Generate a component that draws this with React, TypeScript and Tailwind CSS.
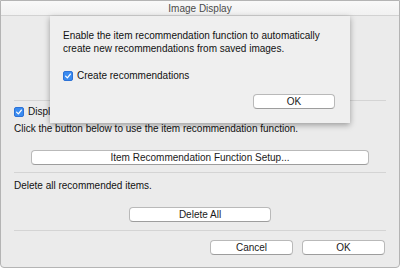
import React from "react";

function Check({ label }: { label: string }) {
  return (
    <div className="flex items-center gap-[4px]">
      <span className="flex h-[10px] w-[10px] items-center justify-center rounded-[2px] bg-[#3a8bf0] border border-[#2d72d6]">
        <svg viewBox="0 0 10 10" className="h-[8px] w-[8px]">
          <path d="M2 5.2 L4.2 7.4 L8 2.6" fill="none" stroke="white" strokeWidth="1.6" strokeLinecap="round" strokeLinejoin="round" />
        </svg>
      </span>
      <span>{label}</span>
    </div>
  );
}

function Btn({ children, className = "" }: { children: React.ReactNode; className?: string }) {
  return (
    <div
      className={
        "flex h-[15px] items-center justify-center rounded-[4px] border border-[#b9b9b9] border-b-[#9d9d9d] bg-white text-[10px] leading-none text-[#1a1a1a] " +
        className
      }
    >
      {children}
    </div>
  );
}

export default function App() {
  return (
    <div className="relative h-[269px] w-[400px] overflow-hidden bg-white font-['Liberation_Sans',Arial,sans-serif] text-[10px] text-[#111] whitespace-nowrap">
      <div className="flex h-[268px] w-[400px] flex-col rounded-b-[4px] border border-[#b4b4b4] bg-[#ebebeb]">
        <div className="flex h-[15px] items-center justify-center border-b border-[#d2d2d2] bg-gradient-to-b from-[#f9f9f9] to-[#f1f1f1] text-[10px] text-[#4a4a4a]">
          Image Display
        </div>

        <div className="flex flex-col px-[13px]">
          <div className="mt-[84px] h-px bg-[#d4d4d4]" />
          <div className="mt-[5px] leading-[12px]">
            <Check label="Display recommended items" />
          </div>
          <p className="mt-[5px] leading-[12px]">Click the button below to use the item recommendation function.</p>
          <div className="mt-[15px] px-[17px]">
            <Btn>Item Recommendation Function Setup...</Btn>
          </div>
          <div className="mt-[7px] h-px bg-[#d4d4d4]" />
          <p className="mt-[7px] leading-[12px]">Delete all recommended items.</p>
          <div className="mt-[15px] flex justify-center">
            <Btn className="w-[142px]">Delete All</Btn>
          </div>
          <div className="mt-[8px] h-px bg-[#d4d4d4]" />
          <div className="mt-[9px] flex justify-end gap-[9px] pr-[1px]">
            <Btn className="w-[83px]">Cancel</Btn>
            <Btn className="w-[83px]">OK</Btn>
          </div>
        </div>
      </div>

      <div className="absolute left-[50px] top-[16px] flex h-[107px] w-[300px] flex-col bg-[#efefef] px-[13px] pt-[13px] shadow-[0_2px_6px_rgba(0,0,0,0.35)]">
        <p className="leading-[13px]">
          Enable the item recommendation function to automatically
          <br />
          create new recommendations from saved images.
        </p>
        <div className="mt-[15px] leading-[12px]">
          <Check label="Create recommendations" />
        </div>
        <div className="mt-[12px] flex justify-end pr-[2px]">
          <Btn className="w-[82px]">OK</Btn>
        </div>
      </div>
    </div>
  );
}
